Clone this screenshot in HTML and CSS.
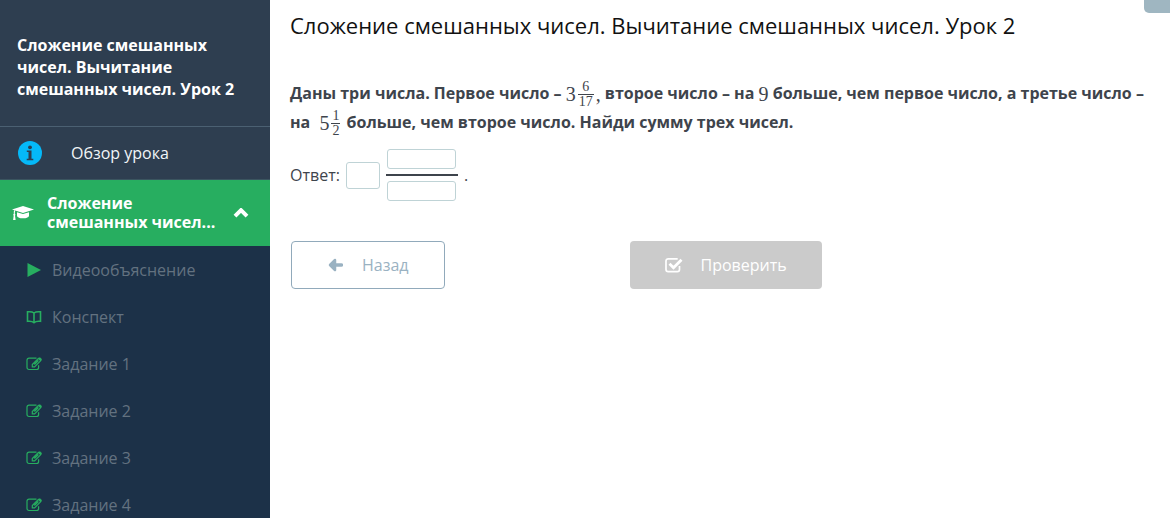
FILE: index.html
```
<!DOCTYPE html>
<html lang="ru">
<head>
  <meta charset="UTF-8">
  <meta name="viewport" content="width=device-width, initial-scale=1.0">
  <title>Сложение смешанных чисел. Вычитание смешанных чисел. Урок 2</title>
  <link rel="stylesheet" href="styles.css">
</head>

<body>
  <!-- shared icons -->
  <svg class="sprite" aria-hidden="true">
    <symbol id="icon-edit" viewBox="0 0 16 14">
      <path d="M12.6 8.2v2.3a2 2 0 0 1-2 2H3a2 2 0 0 1-2-2V3.200a2 2 0 0 1 2-2h7.500" fill="none" stroke="currentColor" stroke-width="1.200" />
      <path d="M12.500 1.300l2.300 2.300-6.200 6.200H6.300V7.500z" fill="none" stroke="currentColor" stroke-width="1.200" />
      <path d="M13.100.700q.7-.7 1.400 0l1 1q.7.7 0 1.400l-1 1-2.400-2.400z" fill="currentColor" />
      <path d="M12.300 3.400L8.300 7.400" stroke="currentColor" stroke-width="1.500" />
    </symbol>
  </svg>

  <div class="page">
    <aside class="sidebar">
      <h2 class="sidebar-title">Сложение смешанных чисел. Вычитание смешанных чисел. Урок 2</h2>
      <a class="overview" href="#overview">
        <svg class="overview-icon" viewBox="0 0 24 24" aria-hidden="true">
          <circle cx="12" cy="12" r="12" fill="#05b9f8" />
          <circle cx="12" cy="6.300" r="1.900" fill="#2e3e50" />
          <path d="M8.800 9.500h4.700v8.200h1.800v1.500H8.700v-1.500h1.800v-6.700H8.800z" fill="#2e3e50" />
        </svg>
        <span>Обзор урока</span>
      </a>
      <button class="topic" type="button" aria-expanded="true">
        <svg class="topic-icon" viewBox="0 0 22 16" aria-hidden="true">
          <path d="M11 1L22 4.500 11 8 0 4.500z" />
          <path d="M5 7.200l6 1.900 6-1.900v3.500c0 1.500-2.700 2.600-6 2.600s-6-1.100-6-2.600z" />
          <path d="M2 5.200l1.300.4c-.4 1-.5 2-.5 3.100.8.500.7 1.500.2 1.900L3.600 15H1.100l.6-4.400c-.6-.5-.6-1.500.1-1.900 0-1.300 0-2.400.2-3.500z" />
        </svg>
        <span class="topic-name">Сложение смешанных чисел...</span>
        <svg class="topic-arrow" viewBox="0 0 16 10" aria-hidden="true">
          <path d="M2 8.200l6-6 6 6" />
        </svg>
      </button>
      <nav class="steps">
        <a class="step" href="#video">
          <svg class="step-icon" viewBox="0 0 16 14" aria-hidden="true">
            <path d="M1.500 0L15 7 1.500 14z" fill="currentColor" />
          </svg>
          <span>Видеообъяснение</span>
        </a>
        <a class="step" href="#summary">
          <svg class="step-icon" viewBox="0 0 16 14" aria-hidden="true">
            <path d="M8 3C6.500 1.800 4 1.500 1.500 1.800v9.500c2.500-.3 5 0 6.500 1.300 1.500-1.300 4-1.600 6.500-1.300V1.800C12 1.500 9.500 1.800 8 3zv9.500" fill="none" stroke="currentColor" stroke-width="1.600" />
          </svg>
          <span>Конспект</span>
        </a>
        <a class="step" href="#task-1">
          <svg class="step-icon" aria-hidden="true"><use href="#icon-edit" /></svg>
          <span>Задание 1</span>
        </a>
        <a class="step" href="#task-2">
          <svg class="step-icon" aria-hidden="true"><use href="#icon-edit" /></svg>
          <span>Задание 2</span>
        </a>
        <a class="step" href="#task-3">
          <svg class="step-icon" aria-hidden="true"><use href="#icon-edit" /></svg>
          <span>Задание 3</span>
        </a>
        <a class="step" href="#task-4">
          <svg class="step-icon" aria-hidden="true"><use href="#icon-edit" /></svg>
          <span>Задание 4</span>
        </a>
      </nav>
    </aside>

    <main class="content">
      <h1>Сложение смешанных чисел. Вычитание смешанных чисел. Урок 2</h1>
      <form class="task">
        <p class="question">
          Даны три числа. Первое число – <span class="math">3<span class="fraction"><span class="top">6</span><span>17</span></span>,</span>
          второе число – на <span class="math">9</span> больше, чем первое число, а третье число – на
          <span class="math spaced">5<span class="fraction"><span class="top">1</span><span>2</span></span></span>
          больше, чем второе число. Найди сумму трех чисел.
        </p>
        <div class="answer">
          <label for="whole">Ответ:</label>
          <input class="whole" type="text" id="whole" name="whole">
          <div class="answer-fraction">
            <input type="text" name="numerator" aria-label="Числитель">
            <span class="bar"></span>
            <input type="text" name="denominator" aria-label="Знаменатель">
          </div>
          <span>.</span>
        </div>
        <div class="actions">
          <button class="btn btn-back" type="button">
            <svg viewBox="0 0 16 14" aria-hidden="true">
              <path d="M8 2L3 7l5 5z" fill="currentColor" stroke="currentColor" stroke-width="2.500" stroke-linejoin="round" />
              <path d="M5 7h9.500" fill="none" stroke="currentColor" stroke-width="3.400" stroke-linecap="round" />
            </svg>
            <span>Назад</span>
          </button>
          <button class="btn btn-check" type="submit" disabled>
            <svg viewBox="0 0 18 16" aria-hidden="true">
              <path d="M14.500 9v3.500a2.200 2.200 0 0 1-2.200 2.200H3.200A2.200 2.200 0 0 1 1 12.500V4a2.200 2.200 0 0 1 2.200-2.200h9.500" fill="none" stroke="currentColor" stroke-width="1.700" />
              <path d="M4.500 6.700l4 4 8-8" fill="none" stroke="currentColor" stroke-width="2.800" />
            </svg>
            <span>Проверить</span>
          </button>
        </div>
      </form>
      <button class="corner" type="button" aria-label="Меню"></button>
    </main>
  </div>
</body>
</html>
```

FILE: styles.css
```
* {
  box-sizing: border-box;
  margin: 0;
  padding: 0;
}

body {
  font-family: "Open Sans", "Noto Sans", sans-serif;
  font-size: 16px;
  color: #3e444c;
  background: #fff;
}

button,
input {
  font: inherit;
}

button {
  border: none;
  cursor: pointer;
}

a {
  text-decoration: none;
}

.sprite {
  display: none;
}

.page {
  display: flex;
  height: 100vh;
}

/* sidebar */
.sidebar {
  flex: 0 0 270px;
  overflow: hidden;
  background: #1c3148;
}

.sidebar-title {
  padding: 34px 16px 26px 17px;
  font-size: 16px;
  line-height: 22px;
  color: #fff;
  background: #2e3e50;
}

.overview {
  display: flex;
  align-items: center;
  gap: 29px;
  height: 54px;
  padding-left: 18px;
  color: #f2f5f8;
  background: #2e3e50;
  border-top: 1px solid #4b6072;
  border-bottom: 1px solid #3b5560;
}

.overview-icon {
  width: 24px;
  height: 24px;
}

.topic {
  display: flex;
  align-items: center;
  gap: 13px;
  width: 100%;
  padding: 14px 21px 14px 12px;
  font-weight: bold;
  line-height: 19px;
  text-align: left;
  color: #fff;
  background: #27ae60;
}

.topic-icon {
  flex: none;
  width: 22px;
  height: 16px;
  fill: #fff;
}

.topic-name {
  flex: 1;
}

.topic-arrow {
  flex: none;
  width: 16px;
  height: 10px;
  fill: none;
  stroke: #fff;
  stroke-width: 4;
}

.step {
  display: flex;
  align-items: center;
  gap: 10px;
  height: 47px;
  padding-left: 26px;
  color: #637280;
}

.step-icon {
  width: 16px;
  height: 14px;
  color: #27ae60;
}

/* lesson */
.content {
  position: relative;
  flex: 1;
  padding: 10px 20px;
}

h1 {
  font-size: 22px;
  font-weight: normal;
  line-height: 30px;
  color: #111;
}

.question {
  margin-top: 39px;
  font-weight: bold;
  line-height: 29px;
}

.math {
  display: inline-flex;
  align-items: center;
  height: 26px;
  font-family: "Liberation Serif", serif;
  font-size: 20px;
  font-weight: normal;
  vertical-align: middle;
}

.spaced {
  margin-left: 5px;
}

.fraction {
  display: flex;
  flex-direction: column;
  margin: 0 2px;
  font-size: 14px;
  line-height: 14px;
  text-align: center;
}

.fraction span {
  padding: 0 1px;
}

.top {
  border-bottom: 1px solid #3e444c;
}

.answer {
  display: flex;
  align-items: center;
  gap: 6px;
  margin-top: 12px;
}

.answer input {
  border: 1px solid #bfd3d6;
  border-radius: 3px;
  text-align: center;
}

.answer .whole {
  width: 34px;
  height: 27px;
}

.answer-fraction {
  display: flex;
  flex-direction: column;
  align-items: center;
  gap: 5px;
  width: 72px;
}

.answer-fraction input {
  width: 69px;
  height: 20px;
}

.bar {
  width: 100%;
  height: 2px;
  background: #3e444c;
}

.actions {
  display: flex;
  gap: 185px;
  margin-top: 40px;
  padding-left: 1px;
}

.btn {
  display: flex;
  align-items: center;
  height: 48px;
  padding: 0 35px;
  border-radius: 4px;
}

.btn-back {
  gap: 19px;
  color: #9ab2c2;
  background: #fff;
  border: 1px solid #91aabb;
}

.btn-back svg {
  width: 16px;
  height: 14px;
}

.btn-check {
  gap: 18px;
  color: #fff;
  background: #cbcbcb;
}

.btn-check svg {
  width: 18px;
  height: 16px;
}

.corner {
  position: absolute;
  top: 0;
  right: 0;
  width: 26px;
  height: 13px;
  background: #9fb6c1;
  border-radius: 0 0 0 5px;
}
```
